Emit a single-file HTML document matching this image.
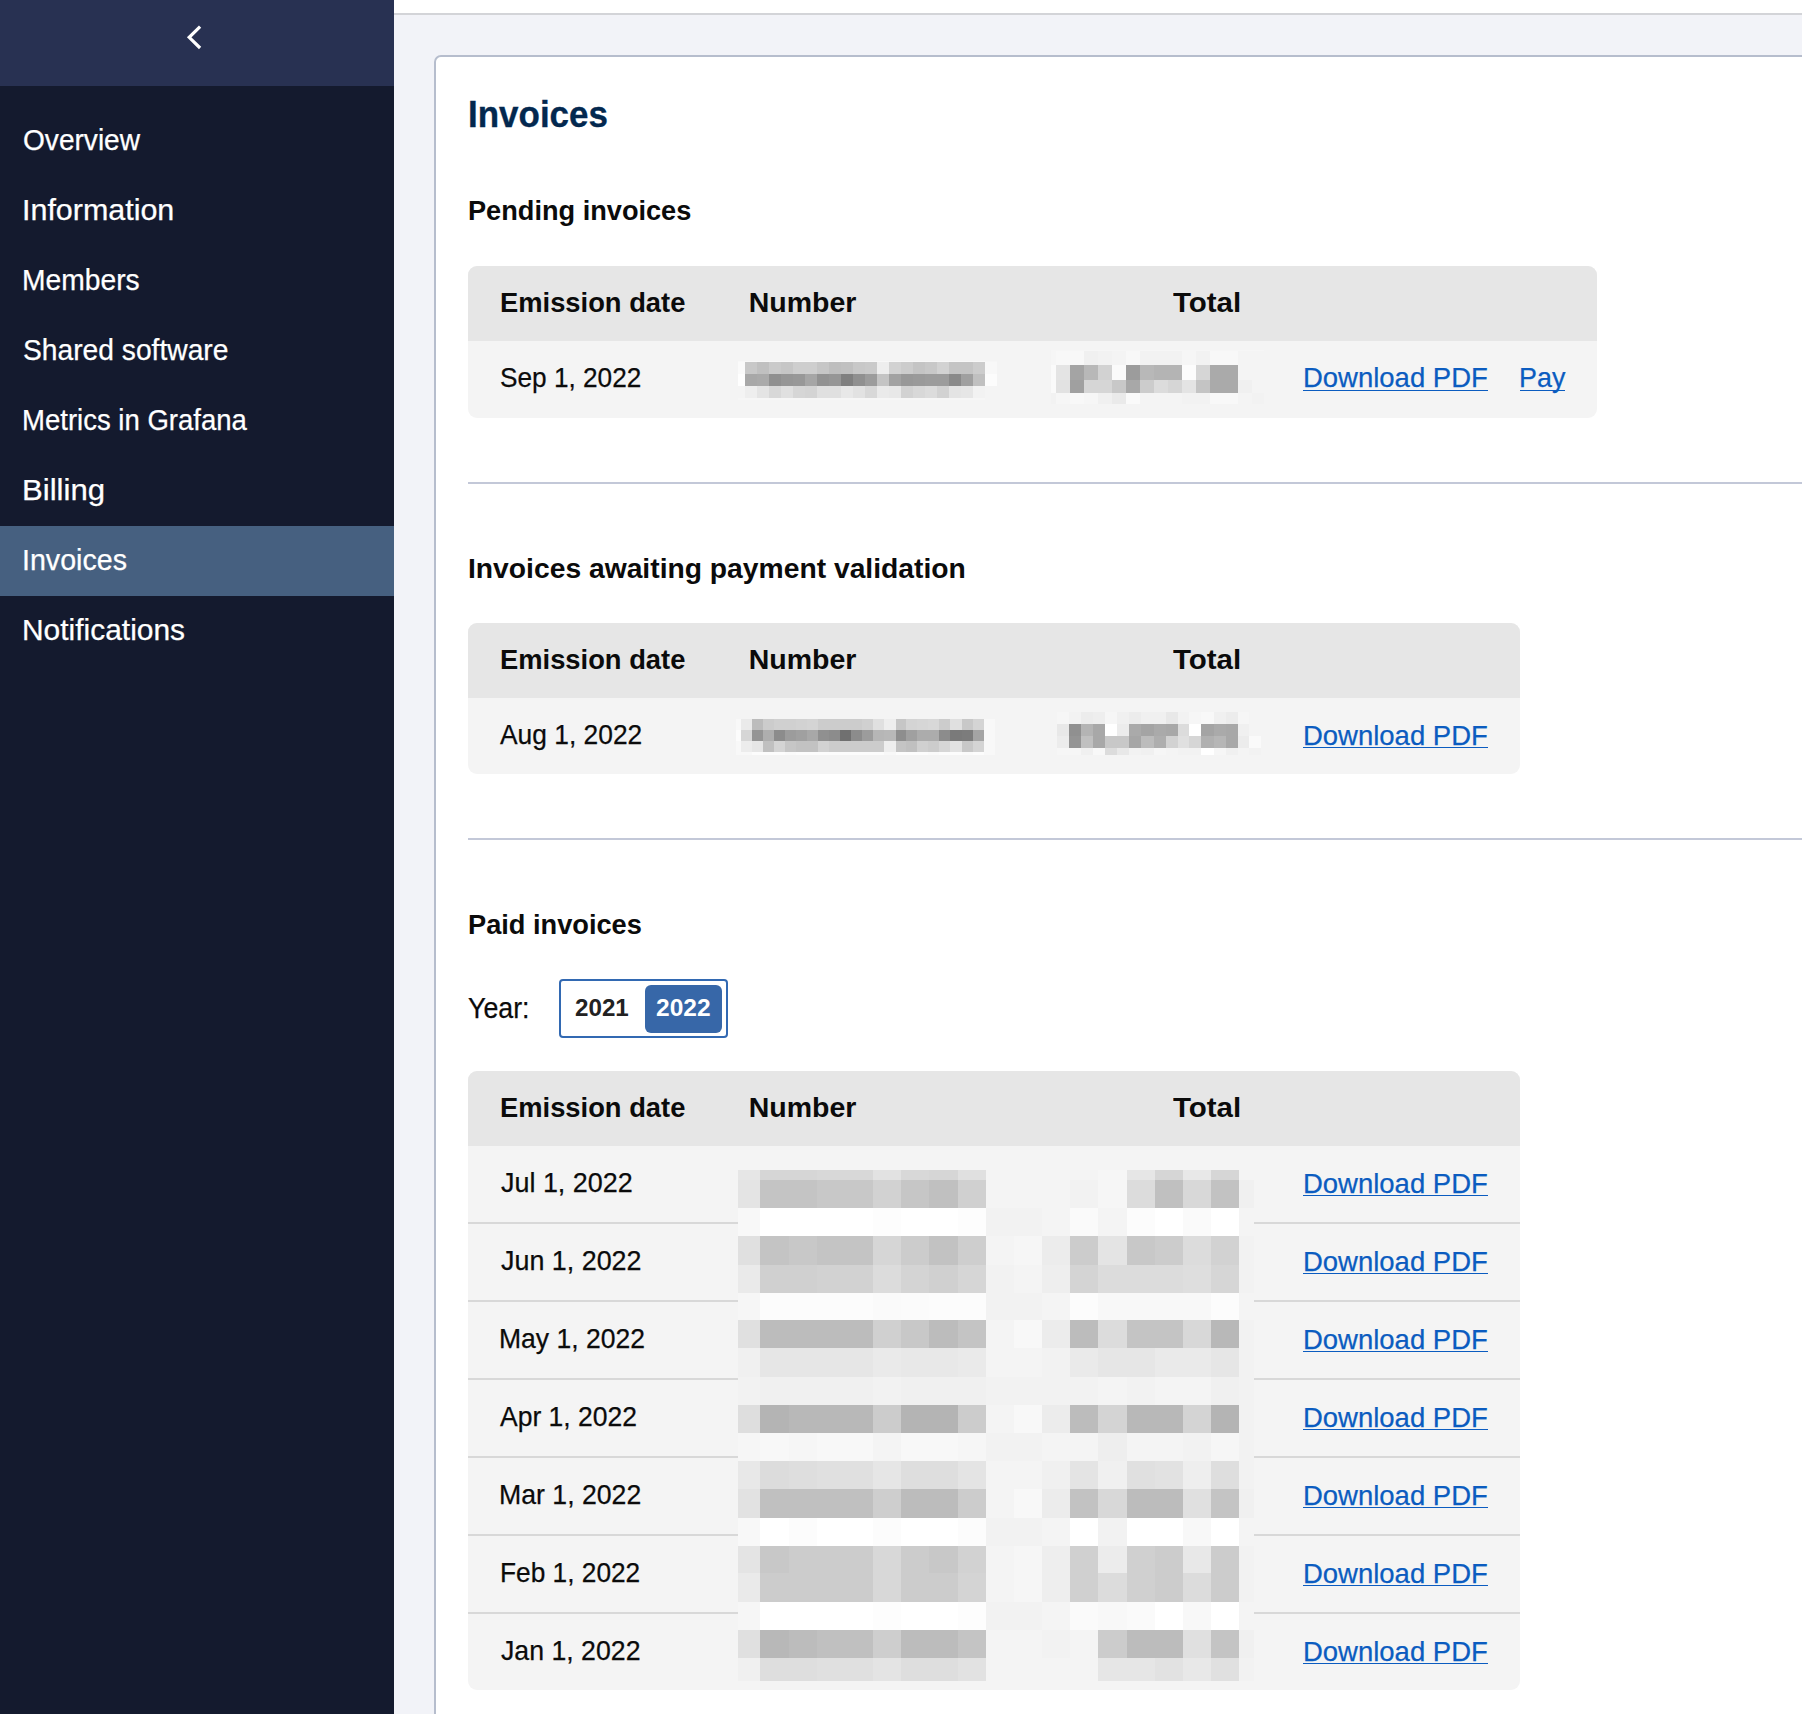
<!DOCTYPE html>
<html><head><meta charset="utf-8"><style>
html,body{margin:0;padding:0;}
body{width:1802px;height:1714px;overflow:hidden;position:relative;background:#f2f3f8;font-family:"Liberation Sans", sans-serif;}
.t{position:absolute;white-space:nowrap;line-height:1;transform-origin:0 0;}
.ul{position:absolute;height:1.3px;background:#0b5cc0;}
.rg{-webkit-text-stroke:0.25px currentColor;}
.tt{-webkit-text-stroke:0.35px currentColor;}
#side{position:absolute;left:0;top:0;width:394px;height:1714px;background:#141a2e;}
#sidehd{position:absolute;left:0;top:0;width:394px;height:86px;background:#283152;}
#active{position:absolute;left:0;top:526px;width:394px;height:70px;background:#466080;}
#topbar{position:absolute;left:394px;top:0;width:1408px;height:13px;background:#fff;border-bottom:2px solid #d3d4d8;}
#card{position:absolute;left:434px;top:55px;width:1500px;height:1800px;background:#fff;border:2px solid #b6bdcd;border-radius:7px;}
.tbl{position:absolute;left:468px;border-radius:9px;overflow:hidden;background:#f4f4f4;}
.th{position:absolute;left:0;top:0;right:0;background:#e6e6e6;}
.sep{position:absolute;left:468px;width:1334px;height:1.6px;background:#c3c8d8;}
.rb{position:absolute;left:468px;width:1052px;height:1.6px;background:#d8d8d8;}
.pix{position:absolute;left:0;top:0;}
#tog{position:absolute;left:559.4px;top:979.3px;width:164.2px;height:55.1px;border:2px solid #3269b2;border-radius:4px;background:#fff;}
#togon{position:absolute;left:645px;top:985px;width:77px;height:48px;background:#3767a8;border-radius:6px;}
</style></head><body>
<div id="topbar"></div>
<div id="side"><div id="sidehd"></div><div id="active"></div>
<svg style="position:absolute;left:0;top:0" width="394" height="86"><path d="M200.1 26.6 L189.2 37.3 L200.1 48" fill="none" stroke="#fff" stroke-width="3.2" stroke-linecap="butt" stroke-linejoin="miter"/></svg>
</div>
<div id="card"></div>
<div class="tbl" style="top:265.8px;width:1129px;height:152.1px"><div class="th" style="height:75.1px"></div></div>
<div class="sep" style="top:482px"></div>
<div class="tbl" style="top:623.1px;width:1052px;height:150.7px"><div class="th" style="height:74.9px"></div></div>
<div class="sep" style="top:838px"></div>
<div id="tog"></div><div id="togon"></div>
<div class="tbl" style="top:1070.8px;width:1052px;height:618.9px"><div class="th" style="height:75.1px"></div></div>
<div class="rb" style="top:1222.1px"></div><div class="rb" style="top:1300.1px"></div><div class="rb" style="top:1378.1px"></div><div class="rb" style="top:1456.1px"></div><div class="rb" style="top:1534.1px"></div><div class="rb" style="top:1612.1px"></div>
<svg class="pix" width="1802" height="1714" viewBox="0 0 1802 1714" shape-rendering="crispEdges"><rect x="738.0" y="360.5" width="7.0" height="1.5" fill="#f8f8f8"/><rect x="745.0" y="360.5" width="12.0" height="1.5" fill="#f8f8f8"/><rect x="757.0" y="360.5" width="12.0" height="1.5" fill="#f8f8f8"/><rect x="769.0" y="360.5" width="12.0" height="1.5" fill="#f8f8f8"/><rect x="781.0" y="360.5" width="12.0" height="1.5" fill="#f8f8f8"/><rect x="793.0" y="360.5" width="12.0" height="1.5" fill="#f8f8f8"/><rect x="805.0" y="360.5" width="12.0" height="1.5" fill="#f8f8f8"/><rect x="817.0" y="360.5" width="12.0" height="1.5" fill="#f8f8f8"/><rect x="829.0" y="360.5" width="12.0" height="1.5" fill="#f8f8f8"/><rect x="841.0" y="360.5" width="12.0" height="1.5" fill="#f8f8f8"/><rect x="853.0" y="360.5" width="12.0" height="1.5" fill="#f8f8f8"/><rect x="865.0" y="360.5" width="12.0" height="1.5" fill="#f8f8f8"/><rect x="877.0" y="360.5" width="12.0" height="1.5" fill="#f8f8f8"/><rect x="889.0" y="360.5" width="12.0" height="1.5" fill="#f8f8f8"/><rect x="901.0" y="360.5" width="12.0" height="1.5" fill="#f8f8f8"/><rect x="913.0" y="360.5" width="12.0" height="1.5" fill="#f8f8f8"/><rect x="925.0" y="360.5" width="12.0" height="1.5" fill="#f8f8f8"/><rect x="937.0" y="360.5" width="12.0" height="1.5" fill="#f8f8f8"/><rect x="949.0" y="360.5" width="12.0" height="1.5" fill="#f8f8f8"/><rect x="961.0" y="360.5" width="12.0" height="1.5" fill="#f8f8f8"/><rect x="973.0" y="360.5" width="12.0" height="1.5" fill="#f8f8f8"/><rect x="985.0" y="360.5" width="12.0" height="1.5" fill="#f6f6f6"/><rect x="738.0" y="362.0" width="7.0" height="12.0" fill="#fafafa"/><rect x="745.0" y="362.0" width="12.0" height="12.0" fill="#c8c8c8"/><rect x="757.0" y="362.0" width="12.0" height="12.0" fill="#c0c0c0"/><rect x="769.0" y="362.0" width="12.0" height="12.0" fill="#cacaca"/><rect x="781.0" y="362.0" width="12.0" height="12.0" fill="#c6c6c6"/><rect x="793.0" y="362.0" width="12.0" height="12.0" fill="#cecece"/><rect x="805.0" y="362.0" width="12.0" height="12.0" fill="#cecece"/><rect x="817.0" y="362.0" width="12.0" height="12.0" fill="#c6c6c6"/><rect x="829.0" y="362.0" width="12.0" height="12.0" fill="#bebebe"/><rect x="841.0" y="362.0" width="12.0" height="12.0" fill="#c0c0c0"/><rect x="853.0" y="362.0" width="12.0" height="12.0" fill="#c8c8c8"/><rect x="865.0" y="362.0" width="12.0" height="12.0" fill="#cacaca"/><rect x="877.0" y="362.0" width="12.0" height="12.0" fill="#eeeeee"/><rect x="889.0" y="362.0" width="12.0" height="12.0" fill="#d2d2d2"/><rect x="901.0" y="362.0" width="12.0" height="12.0" fill="#cccccc"/><rect x="913.0" y="362.0" width="12.0" height="12.0" fill="#c4c4c4"/><rect x="925.0" y="362.0" width="12.0" height="12.0" fill="#c8c8c8"/><rect x="937.0" y="362.0" width="12.0" height="12.0" fill="#d2d2d2"/><rect x="949.0" y="362.0" width="12.0" height="12.0" fill="#c4c4c4"/><rect x="961.0" y="362.0" width="12.0" height="12.0" fill="#c4c4c4"/><rect x="973.0" y="362.0" width="12.0" height="12.0" fill="#cccccc"/><rect x="985.0" y="362.0" width="12.0" height="12.0" fill="#f8f8f8"/><rect x="738.0" y="374.0" width="7.0" height="12.0" fill="#fefefe"/><rect x="745.0" y="374.0" width="12.0" height="12.0" fill="#a8a8a8"/><rect x="757.0" y="374.0" width="12.0" height="12.0" fill="#aaaaaa"/><rect x="769.0" y="374.0" width="12.0" height="12.0" fill="#909090"/><rect x="781.0" y="374.0" width="12.0" height="12.0" fill="#969696"/><rect x="793.0" y="374.0" width="12.0" height="12.0" fill="#989898"/><rect x="805.0" y="374.0" width="12.0" height="12.0" fill="#a6a6a6"/><rect x="817.0" y="374.0" width="12.0" height="12.0" fill="#929292"/><rect x="829.0" y="374.0" width="12.0" height="12.0" fill="#969696"/><rect x="841.0" y="374.0" width="12.0" height="12.0" fill="#808080"/><rect x="853.0" y="374.0" width="12.0" height="12.0" fill="#909090"/><rect x="865.0" y="374.0" width="12.0" height="12.0" fill="#9c9c9c"/><rect x="877.0" y="374.0" width="12.0" height="12.0" fill="#c4c4c4"/><rect x="889.0" y="374.0" width="12.0" height="12.0" fill="#a2a2a2"/><rect x="901.0" y="374.0" width="12.0" height="12.0" fill="#989898"/><rect x="913.0" y="374.0" width="12.0" height="12.0" fill="#9a9a9a"/><rect x="925.0" y="374.0" width="12.0" height="12.0" fill="#9c9c9c"/><rect x="937.0" y="374.0" width="12.0" height="12.0" fill="#9c9c9c"/><rect x="949.0" y="374.0" width="12.0" height="12.0" fill="#8a8a8a"/><rect x="961.0" y="374.0" width="12.0" height="12.0" fill="#a0a0a0"/><rect x="973.0" y="374.0" width="12.0" height="12.0" fill="#c0c0c0"/><rect x="985.0" y="374.0" width="12.0" height="12.0" fill="#fcfcfc"/><rect x="738.0" y="386.0" width="7.0" height="12.0" fill="#f4f4f4"/><rect x="745.0" y="386.0" width="12.0" height="12.0" fill="#eeeeee"/><rect x="757.0" y="386.0" width="12.0" height="12.0" fill="#e4e4e4"/><rect x="769.0" y="386.0" width="12.0" height="12.0" fill="#d8d8d8"/><rect x="781.0" y="386.0" width="12.0" height="12.0" fill="#e0e0e0"/><rect x="793.0" y="386.0" width="12.0" height="12.0" fill="#d6d6d6"/><rect x="805.0" y="386.0" width="12.0" height="12.0" fill="#d4d4d4"/><rect x="817.0" y="386.0" width="12.0" height="12.0" fill="#e0e0e0"/><rect x="829.0" y="386.0" width="12.0" height="12.0" fill="#e0e0e0"/><rect x="841.0" y="386.0" width="12.0" height="12.0" fill="#e8e8e8"/><rect x="853.0" y="386.0" width="12.0" height="12.0" fill="#e2e2e2"/><rect x="865.0" y="386.0" width="12.0" height="12.0" fill="#d8d8d8"/><rect x="877.0" y="386.0" width="12.0" height="12.0" fill="#eaeaea"/><rect x="889.0" y="386.0" width="12.0" height="12.0" fill="#e8e8e8"/><rect x="901.0" y="386.0" width="12.0" height="12.0" fill="#d2d2d2"/><rect x="913.0" y="386.0" width="12.0" height="12.0" fill="#d8d8d8"/><rect x="925.0" y="386.0" width="12.0" height="12.0" fill="#dcdcdc"/><rect x="937.0" y="386.0" width="12.0" height="12.0" fill="#d2d2d2"/><rect x="949.0" y="386.0" width="12.0" height="12.0" fill="#e4e4e4"/><rect x="961.0" y="386.0" width="12.0" height="12.0" fill="#e6e6e6"/><rect x="973.0" y="386.0" width="12.0" height="12.0" fill="#f2f2f2"/><rect x="985.0" y="386.0" width="12.0" height="12.0" fill="#f4f4f4"/><rect x="738.0" y="398.0" width="7.0" height="1.5" fill="#f6f6f6"/><rect x="745.0" y="398.0" width="12.0" height="1.5" fill="#f6f6f6"/><rect x="757.0" y="398.0" width="12.0" height="1.5" fill="#f6f6f6"/><rect x="769.0" y="398.0" width="12.0" height="1.5" fill="#f6f6f6"/><rect x="781.0" y="398.0" width="12.0" height="1.5" fill="#f6f6f6"/><rect x="793.0" y="398.0" width="12.0" height="1.5" fill="#f6f6f6"/><rect x="805.0" y="398.0" width="12.0" height="1.5" fill="#f6f6f6"/><rect x="817.0" y="398.0" width="12.0" height="1.5" fill="#f6f6f6"/><rect x="829.0" y="398.0" width="12.0" height="1.5" fill="#f6f6f6"/><rect x="841.0" y="398.0" width="12.0" height="1.5" fill="#f6f6f6"/><rect x="853.0" y="398.0" width="12.0" height="1.5" fill="#f6f6f6"/><rect x="865.0" y="398.0" width="12.0" height="1.5" fill="#f6f6f6"/><rect x="877.0" y="398.0" width="12.0" height="1.5" fill="#f6f6f6"/><rect x="889.0" y="398.0" width="12.0" height="1.5" fill="#f6f6f6"/><rect x="901.0" y="398.0" width="12.0" height="1.5" fill="#f6f6f6"/><rect x="913.0" y="398.0" width="12.0" height="1.5" fill="#f6f6f6"/><rect x="925.0" y="398.0" width="12.0" height="1.5" fill="#f6f6f6"/><rect x="937.0" y="398.0" width="12.0" height="1.5" fill="#f6f6f6"/><rect x="949.0" y="398.0" width="12.0" height="1.5" fill="#f6f6f6"/><rect x="961.0" y="398.0" width="12.0" height="1.5" fill="#f6f6f6"/><rect x="973.0" y="398.0" width="12.0" height="1.5" fill="#f6f6f6"/><rect x="985.0" y="398.0" width="12.0" height="1.5" fill="#f4f4f4"/><rect x="1051.0" y="349.6" width="5.0" height="1.6" fill="#f6f6f6"/><rect x="1056.0" y="349.6" width="14.0" height="1.6" fill="#f6f6f6"/><rect x="1070.0" y="349.6" width="14.0" height="1.6" fill="#f6f6f6"/><rect x="1084.0" y="349.6" width="14.0" height="1.6" fill="#f6f6f6"/><rect x="1098.0" y="349.6" width="14.0" height="1.6" fill="#f6f6f6"/><rect x="1112.0" y="349.6" width="14.0" height="1.6" fill="#f6f6f6"/><rect x="1126.0" y="349.6" width="14.0" height="1.6" fill="#f6f6f6"/><rect x="1140.0" y="349.6" width="14.0" height="1.6" fill="#f6f6f6"/><rect x="1154.0" y="349.6" width="14.0" height="1.6" fill="#f6f6f6"/><rect x="1168.0" y="349.6" width="14.0" height="1.6" fill="#f6f6f6"/><rect x="1182.0" y="349.6" width="14.0" height="1.6" fill="#f6f6f6"/><rect x="1196.0" y="349.6" width="14.0" height="1.6" fill="#f6f6f6"/><rect x="1210.0" y="349.6" width="14.0" height="1.6" fill="#f6f6f6"/><rect x="1224.0" y="349.6" width="14.0" height="1.6" fill="#f6f6f6"/><rect x="1238.0" y="349.6" width="14.0" height="1.6" fill="#f6f6f6"/><rect x="1252.0" y="349.6" width="12.0" height="1.6" fill="#f6f6f6"/><rect x="1051.0" y="351.2" width="5.0" height="14.1" fill="#f6f6f6"/><rect x="1056.0" y="351.2" width="14.0" height="14.1" fill="#f8f8f8"/><rect x="1070.0" y="351.2" width="14.0" height="14.1" fill="#f8f8f8"/><rect x="1084.0" y="351.2" width="14.0" height="14.1" fill="#f0f0f0"/><rect x="1098.0" y="351.2" width="14.0" height="14.1" fill="#f2f2f2"/><rect x="1112.0" y="351.2" width="14.0" height="14.1" fill="#f4f4f4"/><rect x="1126.0" y="351.2" width="14.0" height="14.1" fill="#f8f8f8"/><rect x="1140.0" y="351.2" width="14.0" height="14.1" fill="#f2f2f2"/><rect x="1154.0" y="351.2" width="14.0" height="14.1" fill="#f2f2f2"/><rect x="1168.0" y="351.2" width="14.0" height="14.1" fill="#f2f2f2"/><rect x="1182.0" y="351.2" width="14.0" height="14.1" fill="#f6f6f6"/><rect x="1196.0" y="351.2" width="14.0" height="14.1" fill="#f2f2f2"/><rect x="1210.0" y="351.2" width="14.0" height="14.1" fill="#f8f8f8"/><rect x="1224.0" y="351.2" width="14.0" height="14.1" fill="#f8f8f8"/><rect x="1238.0" y="351.2" width="14.0" height="14.1" fill="#f4f4f4"/><rect x="1252.0" y="351.2" width="12.0" height="14.1" fill="#f4f4f4"/><rect x="1051.0" y="365.3" width="5.0" height="14.3" fill="#fafafa"/><rect x="1056.0" y="365.3" width="14.0" height="14.3" fill="#e4e4e4"/><rect x="1070.0" y="365.3" width="14.0" height="14.3" fill="#a4a4a4"/><rect x="1084.0" y="365.3" width="14.0" height="14.3" fill="#b8b8b8"/><rect x="1098.0" y="365.3" width="14.0" height="14.3" fill="#d2d2d2"/><rect x="1112.0" y="365.3" width="14.0" height="14.3" fill="#fafafa"/><rect x="1126.0" y="365.3" width="14.0" height="14.3" fill="#9c9c9c"/><rect x="1140.0" y="365.3" width="14.0" height="14.3" fill="#b8b8b8"/><rect x="1154.0" y="365.3" width="14.0" height="14.3" fill="#b4b4b4"/><rect x="1168.0" y="365.3" width="14.0" height="14.3" fill="#b4b4b4"/><rect x="1182.0" y="365.3" width="14.0" height="14.3" fill="#fcfcfc"/><rect x="1196.0" y="365.3" width="14.0" height="14.3" fill="#d6d6d6"/><rect x="1210.0" y="365.3" width="14.0" height="14.3" fill="#aaaaaa"/><rect x="1224.0" y="365.3" width="14.0" height="14.3" fill="#aaaaaa"/><rect x="1238.0" y="365.3" width="14.0" height="14.3" fill="#f4f4f4"/><rect x="1252.0" y="365.3" width="12.0" height="14.3" fill="#f4f4f4"/><rect x="1051.0" y="379.6" width="5.0" height="13.8" fill="#fafafa"/><rect x="1056.0" y="379.6" width="14.0" height="13.8" fill="#e2e2e2"/><rect x="1070.0" y="379.6" width="14.0" height="13.8" fill="#a0a0a0"/><rect x="1084.0" y="379.6" width="14.0" height="13.8" fill="#d6d6d6"/><rect x="1098.0" y="379.6" width="14.0" height="13.8" fill="#d6d6d6"/><rect x="1112.0" y="379.6" width="14.0" height="13.8" fill="#c8c8c8"/><rect x="1126.0" y="379.6" width="14.0" height="13.8" fill="#a8a8a8"/><rect x="1140.0" y="379.6" width="14.0" height="13.8" fill="#cccccc"/><rect x="1154.0" y="379.6" width="14.0" height="13.8" fill="#dcdcdc"/><rect x="1168.0" y="379.6" width="14.0" height="13.8" fill="#d6d6d6"/><rect x="1182.0" y="379.6" width="14.0" height="13.8" fill="#e4e4e4"/><rect x="1196.0" y="379.6" width="14.0" height="13.8" fill="#c4c4c4"/><rect x="1210.0" y="379.6" width="14.0" height="13.8" fill="#aaaaaa"/><rect x="1224.0" y="379.6" width="14.0" height="13.8" fill="#aaaaaa"/><rect x="1238.0" y="379.6" width="14.0" height="13.8" fill="#f0f0f0"/><rect x="1252.0" y="379.6" width="12.0" height="13.8" fill="#f4f4f4"/><rect x="1051.0" y="393.4" width="5.0" height="10.4" fill="#f2f2f2"/><rect x="1056.0" y="393.4" width="14.0" height="10.4" fill="#f6f6f6"/><rect x="1070.0" y="393.4" width="14.0" height="10.4" fill="#f8f8f8"/><rect x="1084.0" y="393.4" width="14.0" height="10.4" fill="#f6f6f6"/><rect x="1098.0" y="393.4" width="14.0" height="10.4" fill="#f0f0f0"/><rect x="1112.0" y="393.4" width="14.0" height="10.4" fill="#eaeaea"/><rect x="1126.0" y="393.4" width="14.0" height="10.4" fill="#fafafa"/><rect x="1140.0" y="393.4" width="14.0" height="10.4" fill="#f4f4f4"/><rect x="1154.0" y="393.4" width="14.0" height="10.4" fill="#f4f4f4"/><rect x="1168.0" y="393.4" width="14.0" height="10.4" fill="#f4f4f4"/><rect x="1182.0" y="393.4" width="14.0" height="10.4" fill="#f2f2f2"/><rect x="1196.0" y="393.4" width="14.0" height="10.4" fill="#f2f2f2"/><rect x="1210.0" y="393.4" width="14.0" height="10.4" fill="#f8f8f8"/><rect x="1224.0" y="393.4" width="14.0" height="10.4" fill="#f8f8f8"/><rect x="1238.0" y="393.4" width="14.0" height="10.4" fill="#f4f4f4"/><rect x="1252.0" y="393.4" width="12.0" height="10.4" fill="#f2f2f2"/><rect x="736.0" y="719.2" width="5.0" height="10.8" fill="#f8f8f8"/><rect x="741.0" y="719.2" width="11.0" height="10.8" fill="#eaeaea"/><rect x="752.0" y="719.2" width="11.0" height="10.8" fill="#bcbcbc"/><rect x="763.0" y="719.2" width="11.0" height="10.8" fill="#cccccc"/><rect x="774.0" y="719.2" width="11.0" height="10.8" fill="#d0d0d0"/><rect x="785.0" y="719.2" width="11.0" height="10.8" fill="#d0d0d0"/><rect x="796.0" y="719.2" width="11.0" height="10.8" fill="#d2d2d2"/><rect x="807.0" y="719.2" width="11.0" height="10.8" fill="#d4d4d4"/><rect x="818.0" y="719.2" width="11.0" height="10.8" fill="#cccccc"/><rect x="829.0" y="719.2" width="11.0" height="10.8" fill="#cccccc"/><rect x="840.0" y="719.2" width="11.0" height="10.8" fill="#cccccc"/><rect x="851.0" y="719.2" width="11.0" height="10.8" fill="#cccccc"/><rect x="862.0" y="719.2" width="11.0" height="10.8" fill="#d0d0d0"/><rect x="873.0" y="719.2" width="11.0" height="10.8" fill="#e0e0e0"/><rect x="884.0" y="719.2" width="12.0" height="10.8" fill="#eeeeee"/><rect x="896.0" y="719.2" width="10.0" height="10.8" fill="#c6c6c6"/><rect x="906.0" y="719.2" width="11.0" height="10.8" fill="#d4d4d4"/><rect x="917.0" y="719.2" width="11.0" height="10.8" fill="#d6d6d6"/><rect x="928.0" y="719.2" width="11.0" height="10.8" fill="#d8d8d8"/><rect x="939.0" y="719.2" width="11.0" height="10.8" fill="#cccccc"/><rect x="950.0" y="719.2" width="12.0" height="10.8" fill="#e0e0e0"/><rect x="962.0" y="719.2" width="11.0" height="10.8" fill="#c8c8c8"/><rect x="973.0" y="719.2" width="11.0" height="10.8" fill="#d4d4d4"/><rect x="984.0" y="719.2" width="11.0" height="10.8" fill="#f8f8f8"/><rect x="736.0" y="730.0" width="5.0" height="11.0" fill="#fcfcfc"/><rect x="741.0" y="730.0" width="11.0" height="11.0" fill="#d6d6d6"/><rect x="752.0" y="730.0" width="11.0" height="11.0" fill="#949494"/><rect x="763.0" y="730.0" width="11.0" height="11.0" fill="#aeaeae"/><rect x="774.0" y="730.0" width="11.0" height="11.0" fill="#8c8c8c"/><rect x="785.0" y="730.0" width="11.0" height="11.0" fill="#9c9c9c"/><rect x="796.0" y="730.0" width="11.0" height="11.0" fill="#a0a0a0"/><rect x="807.0" y="730.0" width="11.0" height="11.0" fill="#a8a8a8"/><rect x="818.0" y="730.0" width="11.0" height="11.0" fill="#909090"/><rect x="829.0" y="730.0" width="11.0" height="11.0" fill="#8c8c8c"/><rect x="840.0" y="730.0" width="11.0" height="11.0" fill="#707070"/><rect x="851.0" y="730.0" width="11.0" height="11.0" fill="#8c8c8c"/><rect x="862.0" y="730.0" width="11.0" height="11.0" fill="#9c9c9c"/><rect x="873.0" y="730.0" width="11.0" height="11.0" fill="#b6b6b6"/><rect x="884.0" y="730.0" width="12.0" height="11.0" fill="#b8b8b8"/><rect x="896.0" y="730.0" width="10.0" height="11.0" fill="#8e8e8e"/><rect x="906.0" y="730.0" width="11.0" height="11.0" fill="#a0a0a0"/><rect x="917.0" y="730.0" width="11.0" height="11.0" fill="#acacac"/><rect x="928.0" y="730.0" width="11.0" height="11.0" fill="#acacac"/><rect x="939.0" y="730.0" width="11.0" height="11.0" fill="#8c8c8c"/><rect x="950.0" y="730.0" width="12.0" height="11.0" fill="#7a7a7a"/><rect x="962.0" y="730.0" width="11.0" height="11.0" fill="#7c7c7c"/><rect x="973.0" y="730.0" width="11.0" height="11.0" fill="#a4a4a4"/><rect x="984.0" y="730.0" width="11.0" height="11.0" fill="#f8f8f8"/><rect x="736.0" y="741.0" width="5.0" height="11.0" fill="#f8f8f8"/><rect x="741.0" y="741.0" width="11.0" height="11.0" fill="#ececec"/><rect x="752.0" y="741.0" width="11.0" height="11.0" fill="#e6e6e6"/><rect x="763.0" y="741.0" width="11.0" height="11.0" fill="#c0c0c0"/><rect x="774.0" y="741.0" width="11.0" height="11.0" fill="#d4d4d4"/><rect x="785.0" y="741.0" width="11.0" height="11.0" fill="#c6c6c6"/><rect x="796.0" y="741.0" width="11.0" height="11.0" fill="#c2c2c2"/><rect x="807.0" y="741.0" width="11.0" height="11.0" fill="#c2c2c2"/><rect x="818.0" y="741.0" width="11.0" height="11.0" fill="#d2d2d2"/><rect x="829.0" y="741.0" width="11.0" height="11.0" fill="#cccccc"/><rect x="840.0" y="741.0" width="11.0" height="11.0" fill="#cccccc"/><rect x="851.0" y="741.0" width="11.0" height="11.0" fill="#cccccc"/><rect x="862.0" y="741.0" width="11.0" height="11.0" fill="#cccccc"/><rect x="873.0" y="741.0" width="11.0" height="11.0" fill="#cccccc"/><rect x="884.0" y="741.0" width="12.0" height="11.0" fill="#eeeeee"/><rect x="896.0" y="741.0" width="10.0" height="11.0" fill="#c4c4c4"/><rect x="906.0" y="741.0" width="11.0" height="11.0" fill="#c0c0c0"/><rect x="917.0" y="741.0" width="11.0" height="11.0" fill="#d0d0d0"/><rect x="928.0" y="741.0" width="11.0" height="11.0" fill="#cccccc"/><rect x="939.0" y="741.0" width="11.0" height="11.0" fill="#d6d6d6"/><rect x="950.0" y="741.0" width="12.0" height="11.0" fill="#e2e2e2"/><rect x="962.0" y="741.0" width="11.0" height="11.0" fill="#c8c8c8"/><rect x="973.0" y="741.0" width="11.0" height="11.0" fill="#d4d4d4"/><rect x="984.0" y="741.0" width="11.0" height="11.0" fill="#f8f8f8"/><rect x="736.0" y="752.0" width="5.0" height="2.5" fill="#f8f8f8"/><rect x="741.0" y="752.0" width="11.0" height="2.5" fill="#f8f8f8"/><rect x="752.0" y="752.0" width="11.0" height="2.5" fill="#fcfcfc"/><rect x="763.0" y="752.0" width="11.0" height="2.5" fill="#fcfcfc"/><rect x="774.0" y="752.0" width="11.0" height="2.5" fill="#fcfcfc"/><rect x="785.0" y="752.0" width="11.0" height="2.5" fill="#fafafa"/><rect x="796.0" y="752.0" width="11.0" height="2.5" fill="#fcfcfc"/><rect x="807.0" y="752.0" width="11.0" height="2.5" fill="#fcfcfc"/><rect x="818.0" y="752.0" width="11.0" height="2.5" fill="#fcfcfc"/><rect x="829.0" y="752.0" width="11.0" height="2.5" fill="#fcfcfc"/><rect x="840.0" y="752.0" width="11.0" height="2.5" fill="#fcfcfc"/><rect x="851.0" y="752.0" width="11.0" height="2.5" fill="#fcfcfc"/><rect x="862.0" y="752.0" width="11.0" height="2.5" fill="#fcfcfc"/><rect x="873.0" y="752.0" width="11.0" height="2.5" fill="#fcfcfc"/><rect x="884.0" y="752.0" width="12.0" height="2.5" fill="#f8f8f8"/><rect x="896.0" y="752.0" width="10.0" height="2.5" fill="#fcfcfc"/><rect x="906.0" y="752.0" width="11.0" height="2.5" fill="#fcfcfc"/><rect x="917.0" y="752.0" width="11.0" height="2.5" fill="#fcfcfc"/><rect x="928.0" y="752.0" width="11.0" height="2.5" fill="#fafafa"/><rect x="939.0" y="752.0" width="11.0" height="2.5" fill="#fcfcfc"/><rect x="950.0" y="752.0" width="12.0" height="2.5" fill="#fcfcfc"/><rect x="962.0" y="752.0" width="11.0" height="2.5" fill="#fafafa"/><rect x="973.0" y="752.0" width="11.0" height="2.5" fill="#fcfcfc"/><rect x="984.0" y="752.0" width="11.0" height="2.5" fill="#f8f8f8"/><rect x="1057.0" y="712.0" width="12.0" height="12.0" fill="#f6f6f6"/><rect x="1069.0" y="712.0" width="12.0" height="12.0" fill="#f2f2f2"/><rect x="1081.0" y="712.0" width="12.0" height="12.0" fill="#ececec"/><rect x="1093.0" y="712.0" width="12.0" height="12.0" fill="#eeeeee"/><rect x="1105.0" y="712.0" width="12.0" height="12.0" fill="#f6f6f6"/><rect x="1117.0" y="712.0" width="12.0" height="12.0" fill="#f0f0f0"/><rect x="1129.0" y="712.0" width="12.0" height="12.0" fill="#ececec"/><rect x="1141.0" y="712.0" width="13.0" height="12.0" fill="#f0f0f0"/><rect x="1154.0" y="712.0" width="12.0" height="12.0" fill="#f0f0f0"/><rect x="1166.0" y="712.0" width="12.0" height="12.0" fill="#e8e8e8"/><rect x="1178.0" y="712.0" width="11.0" height="12.0" fill="#f2f2f2"/><rect x="1189.0" y="712.0" width="12.0" height="12.0" fill="#f6f6f6"/><rect x="1201.0" y="712.0" width="13.0" height="12.0" fill="#f8f8f8"/><rect x="1214.0" y="712.0" width="12.0" height="12.0" fill="#f0f0f0"/><rect x="1226.0" y="712.0" width="12.0" height="12.0" fill="#ececec"/><rect x="1238.0" y="712.0" width="11.0" height="12.0" fill="#f6f6f6"/><rect x="1249.0" y="712.0" width="12.0" height="12.0" fill="#f4f4f4"/><rect x="1057.0" y="724.0" width="12.0" height="12.0" fill="#e8e8e8"/><rect x="1069.0" y="724.0" width="12.0" height="12.0" fill="#909090"/><rect x="1081.0" y="724.0" width="12.0" height="12.0" fill="#b4b4b4"/><rect x="1093.0" y="724.0" width="12.0" height="12.0" fill="#a8a8a8"/><rect x="1105.0" y="724.0" width="12.0" height="12.0" fill="#ffffff"/><rect x="1117.0" y="724.0" width="12.0" height="12.0" fill="#ececec"/><rect x="1129.0" y="724.0" width="12.0" height="12.0" fill="#aaaaaa"/><rect x="1141.0" y="724.0" width="13.0" height="12.0" fill="#a4a4a4"/><rect x="1154.0" y="724.0" width="12.0" height="12.0" fill="#aaaaaa"/><rect x="1166.0" y="724.0" width="12.0" height="12.0" fill="#a8a8a8"/><rect x="1178.0" y="724.0" width="11.0" height="12.0" fill="#dcdcdc"/><rect x="1189.0" y="724.0" width="12.0" height="12.0" fill="#ffffff"/><rect x="1201.0" y="724.0" width="13.0" height="12.0" fill="#a4a4a4"/><rect x="1214.0" y="724.0" width="12.0" height="12.0" fill="#aaaaaa"/><rect x="1226.0" y="724.0" width="12.0" height="12.0" fill="#a8a8a8"/><rect x="1238.0" y="724.0" width="11.0" height="12.0" fill="#f0f0f0"/><rect x="1249.0" y="724.0" width="12.0" height="12.0" fill="#f4f4f4"/><rect x="1057.0" y="736.0" width="12.0" height="12.0" fill="#ececec"/><rect x="1069.0" y="736.0" width="12.0" height="12.0" fill="#949494"/><rect x="1081.0" y="736.0" width="12.0" height="12.0" fill="#c0c0c0"/><rect x="1093.0" y="736.0" width="12.0" height="12.0" fill="#a8a8a8"/><rect x="1105.0" y="736.0" width="12.0" height="12.0" fill="#c8c8c8"/><rect x="1117.0" y="736.0" width="12.0" height="12.0" fill="#c8c8c8"/><rect x="1129.0" y="736.0" width="12.0" height="12.0" fill="#a6a6a6"/><rect x="1141.0" y="736.0" width="13.0" height="12.0" fill="#bcbcbc"/><rect x="1154.0" y="736.0" width="12.0" height="12.0" fill="#aeaeae"/><rect x="1166.0" y="736.0" width="12.0" height="12.0" fill="#d2d2d2"/><rect x="1178.0" y="736.0" width="11.0" height="12.0" fill="#e0e0e0"/><rect x="1189.0" y="736.0" width="12.0" height="12.0" fill="#d6d6d6"/><rect x="1201.0" y="736.0" width="13.0" height="12.0" fill="#b0b0b0"/><rect x="1214.0" y="736.0" width="12.0" height="12.0" fill="#b6b6b6"/><rect x="1226.0" y="736.0" width="12.0" height="12.0" fill="#a8a8a8"/><rect x="1238.0" y="736.0" width="11.0" height="12.0" fill="#ececec"/><rect x="1249.0" y="736.0" width="12.0" height="12.0" fill="#fafafa"/><rect x="1057.0" y="748.0" width="12.0" height="7.0" fill="#f6f6f6"/><rect x="1069.0" y="748.0" width="12.0" height="7.0" fill="#f6f6f6"/><rect x="1081.0" y="748.0" width="12.0" height="7.0" fill="#f0f0f0"/><rect x="1093.0" y="748.0" width="12.0" height="7.0" fill="#f8f8f8"/><rect x="1105.0" y="748.0" width="12.0" height="7.0" fill="#dcdcdc"/><rect x="1117.0" y="748.0" width="12.0" height="7.0" fill="#e8e8e8"/><rect x="1129.0" y="748.0" width="12.0" height="7.0" fill="#f2f2f2"/><rect x="1141.0" y="748.0" width="13.0" height="7.0" fill="#f0f0f0"/><rect x="1154.0" y="748.0" width="12.0" height="7.0" fill="#f6f6f6"/><rect x="1166.0" y="748.0" width="12.0" height="7.0" fill="#f4f4f4"/><rect x="1178.0" y="748.0" width="11.0" height="7.0" fill="#f2f2f2"/><rect x="1189.0" y="748.0" width="12.0" height="7.0" fill="#f2f2f2"/><rect x="1201.0" y="748.0" width="13.0" height="7.0" fill="#ffffff"/><rect x="1214.0" y="748.0" width="12.0" height="7.0" fill="#f6f6f6"/><rect x="1226.0" y="748.0" width="12.0" height="7.0" fill="#f0f0f0"/><rect x="1238.0" y="748.0" width="11.0" height="7.0" fill="#f4f4f4"/><rect x="1249.0" y="748.0" width="12.0" height="7.0" fill="#f2f2f2"/><rect x="738.3" y="1169.8" width="21.4" height="10.1" fill="#e6e6e6"/><rect x="759.7" y="1169.8" width="29.0" height="10.1" fill="#d6d6d6"/><rect x="788.7" y="1169.8" width="28.1" height="10.1" fill="#d6d6d6"/><rect x="816.8" y="1169.8" width="28.4" height="10.1" fill="#d8d8d8"/><rect x="845.2" y="1169.8" width="28.0" height="10.1" fill="#d8d8d8"/><rect x="873.2" y="1169.8" width="27.8" height="10.1" fill="#e2e2e2"/><rect x="901.0" y="1169.8" width="28.4" height="10.1" fill="#d8d8d8"/><rect x="929.4" y="1169.8" width="28.1" height="10.1" fill="#d6d6d6"/><rect x="957.5" y="1169.8" width="28.1" height="10.1" fill="#e0e0e0"/><rect x="985.6" y="1169.8" width="28.4" height="10.1" fill="#f4f4f4"/><rect x="1014.0" y="1169.8" width="28.0" height="10.1" fill="#f4f4f4"/><rect x="1042.0" y="1169.8" width="28.1" height="10.1" fill="#f4f4f4"/><rect x="1070.1" y="1169.8" width="28.1" height="10.1" fill="#f4f4f4"/><rect x="1098.2" y="1169.8" width="28.4" height="10.1" fill="#f6f6f6"/><rect x="1126.6" y="1169.8" width="28.1" height="10.1" fill="#e6e6e6"/><rect x="1154.7" y="1169.8" width="28.1" height="10.1" fill="#d6d6d6"/><rect x="1182.8" y="1169.8" width="28.0" height="10.1" fill="#e8e8e8"/><rect x="1210.8" y="1169.8" width="28.1" height="10.1" fill="#d6d6d6"/><rect x="1238.9" y="1169.8" width="15.3" height="10.1" fill="#f4f4f4"/><rect x="738.3" y="1179.9" width="21.4" height="28.1" fill="#e4e4e4"/><rect x="759.7" y="1179.9" width="29.0" height="28.1" fill="#c4c4c4"/><rect x="788.7" y="1179.9" width="28.1" height="28.1" fill="#c4c4c4"/><rect x="816.8" y="1179.9" width="28.4" height="28.1" fill="#c8c8c8"/><rect x="845.2" y="1179.9" width="28.0" height="28.1" fill="#c8c8c8"/><rect x="873.2" y="1179.9" width="27.8" height="28.1" fill="#d2d2d2"/><rect x="901.0" y="1179.9" width="28.4" height="28.1" fill="#c6c6c6"/><rect x="929.4" y="1179.9" width="28.1" height="28.1" fill="#c0c0c0"/><rect x="957.5" y="1179.9" width="28.1" height="28.1" fill="#d0d0d0"/><rect x="985.6" y="1179.9" width="28.4" height="28.1" fill="#f4f4f4"/><rect x="1014.0" y="1179.9" width="28.0" height="28.1" fill="#f4f4f4"/><rect x="1042.0" y="1179.9" width="28.1" height="28.1" fill="#f4f4f4"/><rect x="1070.1" y="1179.9" width="28.1" height="28.1" fill="#f2f2f2"/><rect x="1098.2" y="1179.9" width="28.4" height="28.1" fill="#f6f6f6"/><rect x="1126.6" y="1179.9" width="28.1" height="28.1" fill="#dcdcdc"/><rect x="1154.7" y="1179.9" width="28.1" height="28.1" fill="#c0c0c0"/><rect x="1182.8" y="1179.9" width="28.0" height="28.1" fill="#d8d8d8"/><rect x="1210.8" y="1179.9" width="28.1" height="28.1" fill="#c2c2c2"/><rect x="1238.9" y="1179.9" width="15.3" height="28.1" fill="#f0f0f0"/><rect x="738.3" y="1208.0" width="21.4" height="28.4" fill="#f8f8f8"/><rect x="759.7" y="1208.0" width="29.0" height="28.4" fill="#ffffff"/><rect x="788.7" y="1208.0" width="28.1" height="28.4" fill="#ffffff"/><rect x="816.8" y="1208.0" width="28.4" height="28.4" fill="#ffffff"/><rect x="845.2" y="1208.0" width="28.0" height="28.4" fill="#ffffff"/><rect x="873.2" y="1208.0" width="27.8" height="28.4" fill="#fdfdfd"/><rect x="901.0" y="1208.0" width="28.4" height="28.4" fill="#ffffff"/><rect x="929.4" y="1208.0" width="28.1" height="28.4" fill="#ffffff"/><rect x="957.5" y="1208.0" width="28.1" height="28.4" fill="#fdfdfd"/><rect x="985.6" y="1208.0" width="28.4" height="28.4" fill="#f2f2f2"/><rect x="1014.0" y="1208.0" width="28.0" height="28.4" fill="#f2f2f2"/><rect x="1042.0" y="1208.0" width="28.1" height="28.4" fill="#f4f4f4"/><rect x="1070.1" y="1208.0" width="28.1" height="28.4" fill="#fafafa"/><rect x="1098.2" y="1208.0" width="28.4" height="28.4" fill="#f4f4f4"/><rect x="1126.6" y="1208.0" width="28.1" height="28.4" fill="#fcfcfc"/><rect x="1154.7" y="1208.0" width="28.1" height="28.4" fill="#ffffff"/><rect x="1182.8" y="1208.0" width="28.0" height="28.4" fill="#fafafa"/><rect x="1210.8" y="1208.0" width="28.1" height="28.4" fill="#ffffff"/><rect x="1238.9" y="1208.0" width="15.3" height="28.4" fill="#f4f4f4"/><rect x="738.3" y="1236.4" width="21.4" height="28.1" fill="#e0e0e0"/><rect x="759.7" y="1236.4" width="29.0" height="28.1" fill="#c4c4c4"/><rect x="788.7" y="1236.4" width="28.1" height="28.1" fill="#c8c8c8"/><rect x="816.8" y="1236.4" width="28.4" height="28.1" fill="#c4c4c4"/><rect x="845.2" y="1236.4" width="28.0" height="28.1" fill="#c4c4c4"/><rect x="873.2" y="1236.4" width="27.8" height="28.1" fill="#d6d6d6"/><rect x="901.0" y="1236.4" width="28.4" height="28.1" fill="#cccccc"/><rect x="929.4" y="1236.4" width="28.1" height="28.1" fill="#c2c2c2"/><rect x="957.5" y="1236.4" width="28.1" height="28.1" fill="#cecece"/><rect x="985.6" y="1236.4" width="28.4" height="28.1" fill="#f4f4f4"/><rect x="1014.0" y="1236.4" width="28.0" height="28.1" fill="#f6f6f6"/><rect x="1042.0" y="1236.4" width="28.1" height="28.1" fill="#ececec"/><rect x="1070.1" y="1236.4" width="28.1" height="28.1" fill="#cccccc"/><rect x="1098.2" y="1236.4" width="28.4" height="28.1" fill="#e4e4e4"/><rect x="1126.6" y="1236.4" width="28.1" height="28.1" fill="#c8c8c8"/><rect x="1154.7" y="1236.4" width="28.1" height="28.1" fill="#cccccc"/><rect x="1182.8" y="1236.4" width="28.0" height="28.1" fill="#dcdcdc"/><rect x="1210.8" y="1236.4" width="28.1" height="28.1" fill="#d2d2d2"/><rect x="1238.9" y="1236.4" width="15.3" height="28.1" fill="#f2f2f2"/><rect x="738.3" y="1264.5" width="21.4" height="28.1" fill="#eaeaea"/><rect x="759.7" y="1264.5" width="29.0" height="28.1" fill="#d0d0d0"/><rect x="788.7" y="1264.5" width="28.1" height="28.1" fill="#d0d0d0"/><rect x="816.8" y="1264.5" width="28.4" height="28.1" fill="#d2d2d2"/><rect x="845.2" y="1264.5" width="28.0" height="28.1" fill="#d2d2d2"/><rect x="873.2" y="1264.5" width="27.8" height="28.1" fill="#dcdcdc"/><rect x="901.0" y="1264.5" width="28.4" height="28.1" fill="#d4d4d4"/><rect x="929.4" y="1264.5" width="28.1" height="28.1" fill="#d0d0d0"/><rect x="957.5" y="1264.5" width="28.1" height="28.1" fill="#d6d6d6"/><rect x="985.6" y="1264.5" width="28.4" height="28.1" fill="#f2f2f2"/><rect x="1014.0" y="1264.5" width="28.0" height="28.1" fill="#f4f4f4"/><rect x="1042.0" y="1264.5" width="28.1" height="28.1" fill="#eeeeee"/><rect x="1070.1" y="1264.5" width="28.1" height="28.1" fill="#d4d4d4"/><rect x="1098.2" y="1264.5" width="28.4" height="28.1" fill="#dcdcdc"/><rect x="1126.6" y="1264.5" width="28.1" height="28.1" fill="#dcdcdc"/><rect x="1154.7" y="1264.5" width="28.1" height="28.1" fill="#dcdcdc"/><rect x="1182.8" y="1264.5" width="28.0" height="28.1" fill="#dedede"/><rect x="1210.8" y="1264.5" width="28.1" height="28.1" fill="#d6d6d6"/><rect x="1238.9" y="1264.5" width="15.3" height="28.1" fill="#f2f2f2"/><rect x="738.3" y="1292.6" width="21.4" height="27.7" fill="#f6f6f6"/><rect x="759.7" y="1292.6" width="29.0" height="27.7" fill="#fcfcfc"/><rect x="788.7" y="1292.6" width="28.1" height="27.7" fill="#fcfcfc"/><rect x="816.8" y="1292.6" width="28.4" height="27.7" fill="#fcfcfc"/><rect x="845.2" y="1292.6" width="28.0" height="27.7" fill="#fcfcfc"/><rect x="873.2" y="1292.6" width="27.8" height="27.7" fill="#fafafa"/><rect x="901.0" y="1292.6" width="28.4" height="27.7" fill="#fbfbfb"/><rect x="929.4" y="1292.6" width="28.1" height="27.7" fill="#fcfcfc"/><rect x="957.5" y="1292.6" width="28.1" height="27.7" fill="#fcfcfc"/><rect x="985.6" y="1292.6" width="28.4" height="27.7" fill="#f2f2f2"/><rect x="1014.0" y="1292.6" width="28.0" height="27.7" fill="#f2f2f2"/><rect x="1042.0" y="1292.6" width="28.1" height="27.7" fill="#f4f4f4"/><rect x="1070.1" y="1292.6" width="28.1" height="27.7" fill="#fcfcfc"/><rect x="1098.2" y="1292.6" width="28.4" height="27.7" fill="#f8f8f8"/><rect x="1126.6" y="1292.6" width="28.1" height="27.7" fill="#f8f8f8"/><rect x="1154.7" y="1292.6" width="28.1" height="27.7" fill="#f8f8f8"/><rect x="1182.8" y="1292.6" width="28.0" height="27.7" fill="#f8f8f8"/><rect x="1210.8" y="1292.6" width="28.1" height="27.7" fill="#fcfcfc"/><rect x="1238.9" y="1292.6" width="15.3" height="27.7" fill="#f4f4f4"/><rect x="738.3" y="1320.3" width="21.4" height="28.1" fill="#e0e0e0"/><rect x="759.7" y="1320.3" width="29.0" height="28.1" fill="#bcbcbc"/><rect x="788.7" y="1320.3" width="28.1" height="28.1" fill="#bcbcbc"/><rect x="816.8" y="1320.3" width="28.4" height="28.1" fill="#bcbcbc"/><rect x="845.2" y="1320.3" width="28.0" height="28.1" fill="#bcbcbc"/><rect x="873.2" y="1320.3" width="27.8" height="28.1" fill="#d0d0d0"/><rect x="901.0" y="1320.3" width="28.4" height="28.1" fill="#c8c8c8"/><rect x="929.4" y="1320.3" width="28.1" height="28.1" fill="#bcbcbc"/><rect x="957.5" y="1320.3" width="28.1" height="28.1" fill="#c4c4c4"/><rect x="985.6" y="1320.3" width="28.4" height="28.1" fill="#f4f4f4"/><rect x="1014.0" y="1320.3" width="28.0" height="28.1" fill="#f8f8f8"/><rect x="1042.0" y="1320.3" width="28.1" height="28.1" fill="#ececec"/><rect x="1070.1" y="1320.3" width="28.1" height="28.1" fill="#bcbcbc"/><rect x="1098.2" y="1320.3" width="28.4" height="28.1" fill="#dcdcdc"/><rect x="1126.6" y="1320.3" width="28.1" height="28.1" fill="#c4c4c4"/><rect x="1154.7" y="1320.3" width="28.1" height="28.1" fill="#c4c4c4"/><rect x="1182.8" y="1320.3" width="28.0" height="28.1" fill="#d8d8d8"/><rect x="1210.8" y="1320.3" width="28.1" height="28.1" fill="#b8b8b8"/><rect x="1238.9" y="1320.3" width="15.3" height="28.1" fill="#f2f2f2"/><rect x="738.3" y="1348.4" width="21.4" height="28.1" fill="#f0f0f0"/><rect x="759.7" y="1348.4" width="29.0" height="28.1" fill="#e6e6e6"/><rect x="788.7" y="1348.4" width="28.1" height="28.1" fill="#e6e6e6"/><rect x="816.8" y="1348.4" width="28.4" height="28.1" fill="#e6e6e6"/><rect x="845.2" y="1348.4" width="28.0" height="28.1" fill="#e6e6e6"/><rect x="873.2" y="1348.4" width="27.8" height="28.1" fill="#eaeaea"/><rect x="901.0" y="1348.4" width="28.4" height="28.1" fill="#e8e8e8"/><rect x="929.4" y="1348.4" width="28.1" height="28.1" fill="#e8e8e8"/><rect x="957.5" y="1348.4" width="28.1" height="28.1" fill="#eaeaea"/><rect x="985.6" y="1348.4" width="28.4" height="28.1" fill="#f4f4f4"/><rect x="1014.0" y="1348.4" width="28.0" height="28.1" fill="#f4f4f4"/><rect x="1042.0" y="1348.4" width="28.1" height="28.1" fill="#f2f2f2"/><rect x="1070.1" y="1348.4" width="28.1" height="28.1" fill="#eaeaea"/><rect x="1098.2" y="1348.4" width="28.4" height="28.1" fill="#e6e6e6"/><rect x="1126.6" y="1348.4" width="28.1" height="28.1" fill="#e6e6e6"/><rect x="1154.7" y="1348.4" width="28.1" height="28.1" fill="#eaeaea"/><rect x="1182.8" y="1348.4" width="28.0" height="28.1" fill="#eaeaea"/><rect x="1210.8" y="1348.4" width="28.1" height="28.1" fill="#e6e6e6"/><rect x="1238.9" y="1348.4" width="15.3" height="28.1" fill="#f2f2f2"/><rect x="738.3" y="1376.5" width="21.4" height="28.2" fill="#f2f2f2"/><rect x="759.7" y="1376.5" width="29.0" height="28.2" fill="#f0f0f0"/><rect x="788.7" y="1376.5" width="28.1" height="28.2" fill="#f0f0f0"/><rect x="816.8" y="1376.5" width="28.4" height="28.2" fill="#f0f0f0"/><rect x="845.2" y="1376.5" width="28.0" height="28.2" fill="#f0f0f0"/><rect x="873.2" y="1376.5" width="27.8" height="28.2" fill="#f2f2f2"/><rect x="901.0" y="1376.5" width="28.4" height="28.2" fill="#f0f0f0"/><rect x="929.4" y="1376.5" width="28.1" height="28.2" fill="#f0f0f0"/><rect x="957.5" y="1376.5" width="28.1" height="28.2" fill="#f0f0f0"/><rect x="985.6" y="1376.5" width="28.4" height="28.2" fill="#f2f2f2"/><rect x="1014.0" y="1376.5" width="28.0" height="28.2" fill="#f2f2f2"/><rect x="1042.0" y="1376.5" width="28.1" height="28.2" fill="#f2f2f2"/><rect x="1070.1" y="1376.5" width="28.1" height="28.2" fill="#f2f2f2"/><rect x="1098.2" y="1376.5" width="28.4" height="28.2" fill="#f4f4f4"/><rect x="1126.6" y="1376.5" width="28.1" height="28.2" fill="#f2f2f2"/><rect x="1154.7" y="1376.5" width="28.1" height="28.2" fill="#f4f4f4"/><rect x="1182.8" y="1376.5" width="28.0" height="28.2" fill="#f4f4f4"/><rect x="1210.8" y="1376.5" width="28.1" height="28.2" fill="#f0f0f0"/><rect x="1238.9" y="1376.5" width="15.3" height="28.2" fill="#f2f2f2"/><rect x="738.3" y="1404.7" width="21.4" height="28.0" fill="#dedede"/><rect x="759.7" y="1404.7" width="29.0" height="28.0" fill="#b4b4b4"/><rect x="788.7" y="1404.7" width="28.1" height="28.0" fill="#b8b8b8"/><rect x="816.8" y="1404.7" width="28.4" height="28.0" fill="#b8b8b8"/><rect x="845.2" y="1404.7" width="28.0" height="28.0" fill="#b8b8b8"/><rect x="873.2" y="1404.7" width="27.8" height="28.0" fill="#cccccc"/><rect x="901.0" y="1404.7" width="28.4" height="28.0" fill="#b4b4b4"/><rect x="929.4" y="1404.7" width="28.1" height="28.0" fill="#b4b4b4"/><rect x="957.5" y="1404.7" width="28.1" height="28.0" fill="#cccccc"/><rect x="985.6" y="1404.7" width="28.4" height="28.0" fill="#f4f4f4"/><rect x="1014.0" y="1404.7" width="28.0" height="28.0" fill="#f8f8f8"/><rect x="1042.0" y="1404.7" width="28.1" height="28.0" fill="#ececec"/><rect x="1070.1" y="1404.7" width="28.1" height="28.0" fill="#bcbcbc"/><rect x="1098.2" y="1404.7" width="28.4" height="28.0" fill="#d4d4d4"/><rect x="1126.6" y="1404.7" width="28.1" height="28.0" fill="#b8b8b8"/><rect x="1154.7" y="1404.7" width="28.1" height="28.0" fill="#b8b8b8"/><rect x="1182.8" y="1404.7" width="28.0" height="28.0" fill="#d4d4d4"/><rect x="1210.8" y="1404.7" width="28.1" height="28.0" fill="#b4b4b4"/><rect x="1238.9" y="1404.7" width="15.3" height="28.0" fill="#f2f2f2"/><rect x="738.3" y="1432.7" width="21.4" height="28.3" fill="#f6f6f6"/><rect x="759.7" y="1432.7" width="29.0" height="28.3" fill="#f8f8f8"/><rect x="788.7" y="1432.7" width="28.1" height="28.3" fill="#f6f6f6"/><rect x="816.8" y="1432.7" width="28.4" height="28.3" fill="#f8f8f8"/><rect x="845.2" y="1432.7" width="28.0" height="28.3" fill="#f8f8f8"/><rect x="873.2" y="1432.7" width="27.8" height="28.3" fill="#f4f4f4"/><rect x="901.0" y="1432.7" width="28.4" height="28.3" fill="#f8f8f8"/><rect x="929.4" y="1432.7" width="28.1" height="28.3" fill="#f8f8f8"/><rect x="957.5" y="1432.7" width="28.1" height="28.3" fill="#f6f6f6"/><rect x="985.6" y="1432.7" width="28.4" height="28.3" fill="#f2f2f2"/><rect x="1014.0" y="1432.7" width="28.0" height="28.3" fill="#f2f2f2"/><rect x="1042.0" y="1432.7" width="28.1" height="28.3" fill="#f4f4f4"/><rect x="1070.1" y="1432.7" width="28.1" height="28.3" fill="#f4f4f4"/><rect x="1098.2" y="1432.7" width="28.4" height="28.3" fill="#eeeeee"/><rect x="1126.6" y="1432.7" width="28.1" height="28.3" fill="#f4f4f4"/><rect x="1154.7" y="1432.7" width="28.1" height="28.3" fill="#f4f4f4"/><rect x="1182.8" y="1432.7" width="28.0" height="28.3" fill="#f2f2f2"/><rect x="1210.8" y="1432.7" width="28.1" height="28.3" fill="#f6f6f6"/><rect x="1238.9" y="1432.7" width="15.3" height="28.3" fill="#f2f2f2"/><rect x="738.3" y="1461.0" width="21.4" height="28.0" fill="#e8e8e8"/><rect x="759.7" y="1461.0" width="29.0" height="28.0" fill="#dcdcdc"/><rect x="788.7" y="1461.0" width="28.1" height="28.0" fill="#dedede"/><rect x="816.8" y="1461.0" width="28.4" height="28.0" fill="#e0e0e0"/><rect x="845.2" y="1461.0" width="28.0" height="28.0" fill="#e0e0e0"/><rect x="873.2" y="1461.0" width="27.8" height="28.0" fill="#e6e6e6"/><rect x="901.0" y="1461.0" width="28.4" height="28.0" fill="#dedede"/><rect x="929.4" y="1461.0" width="28.1" height="28.0" fill="#dedede"/><rect x="957.5" y="1461.0" width="28.1" height="28.0" fill="#e4e4e4"/><rect x="985.6" y="1461.0" width="28.4" height="28.0" fill="#f4f4f4"/><rect x="1014.0" y="1461.0" width="28.0" height="28.0" fill="#f4f4f4"/><rect x="1042.0" y="1461.0" width="28.1" height="28.0" fill="#f0f0f0"/><rect x="1070.1" y="1461.0" width="28.1" height="28.0" fill="#e4e4e4"/><rect x="1098.2" y="1461.0" width="28.4" height="28.0" fill="#f0f0f0"/><rect x="1126.6" y="1461.0" width="28.1" height="28.0" fill="#e0e0e0"/><rect x="1154.7" y="1461.0" width="28.1" height="28.0" fill="#e2e2e2"/><rect x="1182.8" y="1461.0" width="28.0" height="28.0" fill="#eeeeee"/><rect x="1210.8" y="1461.0" width="28.1" height="28.0" fill="#dedede"/><rect x="1238.9" y="1461.0" width="15.3" height="28.0" fill="#f2f2f2"/><rect x="738.3" y="1489.0" width="21.4" height="28.5" fill="#e2e2e2"/><rect x="759.7" y="1489.0" width="29.0" height="28.5" fill="#c0c0c0"/><rect x="788.7" y="1489.0" width="28.1" height="28.5" fill="#c0c0c0"/><rect x="816.8" y="1489.0" width="28.4" height="28.5" fill="#c0c0c0"/><rect x="845.2" y="1489.0" width="28.0" height="28.5" fill="#c0c0c0"/><rect x="873.2" y="1489.0" width="27.8" height="28.5" fill="#cecece"/><rect x="901.0" y="1489.0" width="28.4" height="28.5" fill="#bcbcbc"/><rect x="929.4" y="1489.0" width="28.1" height="28.5" fill="#bcbcbc"/><rect x="957.5" y="1489.0" width="28.1" height="28.5" fill="#cccccc"/><rect x="985.6" y="1489.0" width="28.4" height="28.5" fill="#f4f4f4"/><rect x="1014.0" y="1489.0" width="28.0" height="28.5" fill="#f8f8f8"/><rect x="1042.0" y="1489.0" width="28.1" height="28.5" fill="#ececec"/><rect x="1070.1" y="1489.0" width="28.1" height="28.5" fill="#c2c2c2"/><rect x="1098.2" y="1489.0" width="28.4" height="28.5" fill="#d8d8d8"/><rect x="1126.6" y="1489.0" width="28.1" height="28.5" fill="#bcbcbc"/><rect x="1154.7" y="1489.0" width="28.1" height="28.5" fill="#bcbcbc"/><rect x="1182.8" y="1489.0" width="28.0" height="28.5" fill="#e0e0e0"/><rect x="1210.8" y="1489.0" width="28.1" height="28.5" fill="#c4c4c4"/><rect x="1238.9" y="1489.0" width="15.3" height="28.5" fill="#f0f0f0"/><rect x="738.3" y="1517.5" width="21.4" height="28.1" fill="#f8f8f8"/><rect x="759.7" y="1517.5" width="29.0" height="28.1" fill="#ffffff"/><rect x="788.7" y="1517.5" width="28.1" height="28.1" fill="#fcfcfc"/><rect x="816.8" y="1517.5" width="28.4" height="28.1" fill="#ffffff"/><rect x="845.2" y="1517.5" width="28.0" height="28.1" fill="#ffffff"/><rect x="873.2" y="1517.5" width="27.8" height="28.1" fill="#fcfcfc"/><rect x="901.0" y="1517.5" width="28.4" height="28.1" fill="#ffffff"/><rect x="929.4" y="1517.5" width="28.1" height="28.1" fill="#ffffff"/><rect x="957.5" y="1517.5" width="28.1" height="28.1" fill="#fcfcfc"/><rect x="985.6" y="1517.5" width="28.4" height="28.1" fill="#f2f2f2"/><rect x="1014.0" y="1517.5" width="28.0" height="28.1" fill="#f2f2f2"/><rect x="1042.0" y="1517.5" width="28.1" height="28.1" fill="#f4f4f4"/><rect x="1070.1" y="1517.5" width="28.1" height="28.1" fill="#ffffff"/><rect x="1098.2" y="1517.5" width="28.4" height="28.1" fill="#f2f2f2"/><rect x="1126.6" y="1517.5" width="28.1" height="28.1" fill="#ffffff"/><rect x="1154.7" y="1517.5" width="28.1" height="28.1" fill="#ffffff"/><rect x="1182.8" y="1517.5" width="28.0" height="28.1" fill="#f8f8f8"/><rect x="1210.8" y="1517.5" width="28.1" height="28.1" fill="#ffffff"/><rect x="1238.9" y="1517.5" width="15.3" height="28.1" fill="#f4f4f4"/><rect x="738.3" y="1545.6" width="21.4" height="27.8" fill="#e4e4e4"/><rect x="759.7" y="1545.6" width="29.0" height="27.8" fill="#c8c8c8"/><rect x="788.7" y="1545.6" width="28.1" height="27.8" fill="#cccccc"/><rect x="816.8" y="1545.6" width="28.4" height="27.8" fill="#cccccc"/><rect x="845.2" y="1545.6" width="28.0" height="27.8" fill="#cccccc"/><rect x="873.2" y="1545.6" width="27.8" height="27.8" fill="#d8d8d8"/><rect x="901.0" y="1545.6" width="28.4" height="27.8" fill="#cccccc"/><rect x="929.4" y="1545.6" width="28.1" height="27.8" fill="#c8c8c8"/><rect x="957.5" y="1545.6" width="28.1" height="27.8" fill="#d2d2d2"/><rect x="985.6" y="1545.6" width="28.4" height="27.8" fill="#f4f4f4"/><rect x="1014.0" y="1545.6" width="28.0" height="27.8" fill="#f6f6f6"/><rect x="1042.0" y="1545.6" width="28.1" height="27.8" fill="#eeeeee"/><rect x="1070.1" y="1545.6" width="28.1" height="27.8" fill="#d0d0d0"/><rect x="1098.2" y="1545.6" width="28.4" height="27.8" fill="#ececec"/><rect x="1126.6" y="1545.6" width="28.1" height="27.8" fill="#d0d0d0"/><rect x="1154.7" y="1545.6" width="28.1" height="27.8" fill="#cccccc"/><rect x="1182.8" y="1545.6" width="28.0" height="27.8" fill="#e8e8e8"/><rect x="1210.8" y="1545.6" width="28.1" height="27.8" fill="#cccccc"/><rect x="1238.9" y="1545.6" width="15.3" height="27.8" fill="#f2f2f2"/><rect x="738.3" y="1573.4" width="21.4" height="28.1" fill="#eaeaea"/><rect x="759.7" y="1573.4" width="29.0" height="28.1" fill="#cccccc"/><rect x="788.7" y="1573.4" width="28.1" height="28.1" fill="#cccccc"/><rect x="816.8" y="1573.4" width="28.4" height="28.1" fill="#cccccc"/><rect x="845.2" y="1573.4" width="28.0" height="28.1" fill="#cccccc"/><rect x="873.2" y="1573.4" width="27.8" height="28.1" fill="#d8d8d8"/><rect x="901.0" y="1573.4" width="28.4" height="28.1" fill="#cccccc"/><rect x="929.4" y="1573.4" width="28.1" height="28.1" fill="#cccccc"/><rect x="957.5" y="1573.4" width="28.1" height="28.1" fill="#d4d4d4"/><rect x="985.6" y="1573.4" width="28.4" height="28.1" fill="#f4f4f4"/><rect x="1014.0" y="1573.4" width="28.0" height="28.1" fill="#f6f6f6"/><rect x="1042.0" y="1573.4" width="28.1" height="28.1" fill="#eeeeee"/><rect x="1070.1" y="1573.4" width="28.1" height="28.1" fill="#d0d0d0"/><rect x="1098.2" y="1573.4" width="28.4" height="28.1" fill="#dcdcdc"/><rect x="1126.6" y="1573.4" width="28.1" height="28.1" fill="#d0d0d0"/><rect x="1154.7" y="1573.4" width="28.1" height="28.1" fill="#cccccc"/><rect x="1182.8" y="1573.4" width="28.0" height="28.1" fill="#dcdcdc"/><rect x="1210.8" y="1573.4" width="28.1" height="28.1" fill="#cccccc"/><rect x="1238.9" y="1573.4" width="15.3" height="28.1" fill="#f2f2f2"/><rect x="738.3" y="1601.5" width="21.4" height="28.0" fill="#f6f6f6"/><rect x="759.7" y="1601.5" width="29.0" height="28.0" fill="#ffffff"/><rect x="788.7" y="1601.5" width="28.1" height="28.0" fill="#ffffff"/><rect x="816.8" y="1601.5" width="28.4" height="28.0" fill="#ffffff"/><rect x="845.2" y="1601.5" width="28.0" height="28.0" fill="#ffffff"/><rect x="873.2" y="1601.5" width="27.8" height="28.0" fill="#fdfdfd"/><rect x="901.0" y="1601.5" width="28.4" height="28.0" fill="#ffffff"/><rect x="929.4" y="1601.5" width="28.1" height="28.0" fill="#ffffff"/><rect x="957.5" y="1601.5" width="28.1" height="28.0" fill="#fdfdfd"/><rect x="985.6" y="1601.5" width="28.4" height="28.0" fill="#f2f2f2"/><rect x="1014.0" y="1601.5" width="28.0" height="28.0" fill="#f2f2f2"/><rect x="1042.0" y="1601.5" width="28.1" height="28.0" fill="#f4f4f4"/><rect x="1070.1" y="1601.5" width="28.1" height="28.0" fill="#fafafa"/><rect x="1098.2" y="1601.5" width="28.4" height="28.0" fill="#f8f8f8"/><rect x="1126.6" y="1601.5" width="28.1" height="28.0" fill="#fafafa"/><rect x="1154.7" y="1601.5" width="28.1" height="28.0" fill="#ffffff"/><rect x="1182.8" y="1601.5" width="28.0" height="28.0" fill="#f8f8f8"/><rect x="1210.8" y="1601.5" width="28.1" height="28.0" fill="#ffffff"/><rect x="1238.9" y="1601.5" width="15.3" height="28.0" fill="#f4f4f4"/><rect x="738.3" y="1629.5" width="21.4" height="28.5" fill="#e0e0e0"/><rect x="759.7" y="1629.5" width="29.0" height="28.5" fill="#b8b8b8"/><rect x="788.7" y="1629.5" width="28.1" height="28.5" fill="#bcbcbc"/><rect x="816.8" y="1629.5" width="28.4" height="28.5" fill="#c0c0c0"/><rect x="845.2" y="1629.5" width="28.0" height="28.5" fill="#c0c0c0"/><rect x="873.2" y="1629.5" width="27.8" height="28.5" fill="#cecece"/><rect x="901.0" y="1629.5" width="28.4" height="28.5" fill="#bcbcbc"/><rect x="929.4" y="1629.5" width="28.1" height="28.5" fill="#bcbcbc"/><rect x="957.5" y="1629.5" width="28.1" height="28.5" fill="#c4c4c4"/><rect x="985.6" y="1629.5" width="28.4" height="28.5" fill="#f4f4f4"/><rect x="1014.0" y="1629.5" width="28.0" height="28.5" fill="#f4f4f4"/><rect x="1042.0" y="1629.5" width="28.1" height="28.5" fill="#f2f2f2"/><rect x="1070.1" y="1629.5" width="28.1" height="28.5" fill="#f4f4f4"/><rect x="1098.2" y="1629.5" width="28.4" height="28.5" fill="#cccccc"/><rect x="1126.6" y="1629.5" width="28.1" height="28.5" fill="#bcbcbc"/><rect x="1154.7" y="1629.5" width="28.1" height="28.5" fill="#bcbcbc"/><rect x="1182.8" y="1629.5" width="28.0" height="28.5" fill="#e0e0e0"/><rect x="1210.8" y="1629.5" width="28.1" height="28.5" fill="#c4c4c4"/><rect x="1238.9" y="1629.5" width="15.3" height="28.5" fill="#f0f0f0"/><rect x="738.3" y="1658.0" width="21.4" height="22.8" fill="#f0f0f0"/><rect x="759.7" y="1658.0" width="29.0" height="22.8" fill="#dedede"/><rect x="788.7" y="1658.0" width="28.1" height="22.8" fill="#dedede"/><rect x="816.8" y="1658.0" width="28.4" height="22.8" fill="#e0e0e0"/><rect x="845.2" y="1658.0" width="28.0" height="22.8" fill="#e0e0e0"/><rect x="873.2" y="1658.0" width="27.8" height="22.8" fill="#e4e4e4"/><rect x="901.0" y="1658.0" width="28.4" height="22.8" fill="#dedede"/><rect x="929.4" y="1658.0" width="28.1" height="22.8" fill="#dedede"/><rect x="957.5" y="1658.0" width="28.1" height="22.8" fill="#e2e2e2"/><rect x="985.6" y="1658.0" width="28.4" height="22.8" fill="#f4f4f4"/><rect x="1014.0" y="1658.0" width="28.0" height="22.8" fill="#f4f4f4"/><rect x="1042.0" y="1658.0" width="28.1" height="22.8" fill="#f4f4f4"/><rect x="1070.1" y="1658.0" width="28.1" height="22.8" fill="#f4f4f4"/><rect x="1098.2" y="1658.0" width="28.4" height="22.8" fill="#e6e6e6"/><rect x="1126.6" y="1658.0" width="28.1" height="22.8" fill="#e6e6e6"/><rect x="1154.7" y="1658.0" width="28.1" height="22.8" fill="#e2e2e2"/><rect x="1182.8" y="1658.0" width="28.0" height="22.8" fill="#e8e8e8"/><rect x="1210.8" y="1658.0" width="28.1" height="22.8" fill="#e0e0e0"/><rect x="1238.9" y="1658.0" width="15.3" height="22.8" fill="#f2f2f2"/></svg>
<div class="t rg" style="left:23.48px;top:125.75px;font-size:29.0px;font-weight:normal;color:#ffffff;transform:scaleX(0.9681);">Overview</div><div class="t rg" style="left:21.86px;top:195.75px;font-size:29.0px;font-weight:normal;color:#ffffff;transform:scaleX(1.0495);">Information</div><div class="t rg" style="left:22.34px;top:265.75px;font-size:29.0px;font-weight:normal;color:#ffffff;transform:scaleX(0.9739);">Members</div><div class="t rg" style="left:23.47px;top:335.75px;font-size:29.0px;font-weight:normal;color:#ffffff;transform:scaleX(0.9729);">Shared software</div><div class="t rg" style="left:22.40px;top:405.75px;font-size:29.0px;font-weight:normal;color:#ffffff;transform:scaleX(0.9493);">Metrics in Grafana</div><div class="t rg" style="left:22.11px;top:475.75px;font-size:29.0px;font-weight:normal;color:#ffffff;transform:scaleX(1.0732);">Billing</div><div class="t rg" style="left:22.03px;top:545.75px;font-size:29.0px;font-weight:normal;color:#ffffff;transform:scaleX(0.9863);">Invoices</div><div class="t rg" style="left:22.20px;top:615.75px;font-size:29.0px;font-weight:normal;color:#ffffff;transform:scaleX(1.0325);">Notifications</div><div class="t tt" style="left:467.70px;top:95.97px;font-size:37.25px;font-weight:bold;color:#03284f;transform:scaleX(0.9389);">Invoices</div><div class="t" style="left:467.77px;top:197.21px;font-size:27.75px;font-weight:bold;color:#0b0b0b;transform:scaleX(0.9785);">Pending invoices</div><div class="t" style="left:467.50px;top:554.51px;font-size:27.75px;font-weight:bold;color:#0b0b0b;transform:scaleX(1.0184);">Invoices awaiting payment validation</div><div class="t" style="left:467.57px;top:910.81px;font-size:27.75px;font-weight:bold;color:#0b0b0b;transform:scaleX(0.9800);">Paid invoices</div><div class="t" style="left:499.86px;top:288.07px;font-size:28.5px;font-weight:bold;color:#0b0b0b;transform:scaleX(0.9593);">Emission date</div><div class="t" style="left:748.69px;top:288.07px;font-size:28.5px;font-weight:bold;color:#0b0b0b;">Number</div><div class="t" style="left:1173.31px;top:288.07px;font-size:28.5px;font-weight:bold;color:#0b0b0b;transform:scaleX(1.0338);">Total</div><div class="t rg" style="left:499.95px;top:363.90px;font-size:28.0px;font-weight:normal;color:#0b0b0b;transform:scaleX(0.9354);">Sep 1, 2022</div><div class="t rg" style="left:1303.10px;top:363.47px;font-size:28.5px;font-weight:normal;color:#0b5cc0;transform:scaleX(0.9639);">Download PDF</div><div class="ul" style="left:1303px;width:185.0px;top:390px"></div><div class="t rg" style="left:1518.65px;top:363.47px;font-size:28.5px;font-weight:normal;color:#0b5cc0;transform:scaleX(0.9438);">Pay</div><div class="ul" style="left:1520.2px;width:45.1px;top:390px"></div><div class="t" style="left:499.86px;top:645.37px;font-size:28.5px;font-weight:bold;color:#0b0b0b;transform:scaleX(0.9593);">Emission date</div><div class="t" style="left:748.69px;top:645.37px;font-size:28.5px;font-weight:bold;color:#0b0b0b;">Number</div><div class="t" style="left:1173.31px;top:645.37px;font-size:28.5px;font-weight:bold;color:#0b0b0b;transform:scaleX(1.0338);">Total</div><div class="t rg" style="left:500.00px;top:721.40px;font-size:28.0px;font-weight:normal;color:#0b0b0b;transform:scaleX(0.9417);">Aug 1, 2022</div><div class="t rg" style="left:1303.10px;top:720.97px;font-size:28.5px;font-weight:normal;color:#0b5cc0;transform:scaleX(0.9639);">Download PDF</div><div class="ul" style="left:1303px;width:185.0px;top:747px"></div><div class="t rg" style="left:467.96px;top:993.56px;font-size:28.75px;font-weight:normal;color:#0b0b0b;transform:scaleX(0.9305);">Year:</div><div class="t" style="left:575.48px;top:995.70px;font-size:23.75px;font-weight:bold;color:#222222;transform:scaleX(1.0175);">2021</div><div class="t" style="left:655.76px;top:995.70px;font-size:23.75px;font-weight:bold;color:#ffffff;transform:scaleX(1.0319);">2022</div><div class="t" style="left:499.86px;top:1093.07px;font-size:28.5px;font-weight:bold;color:#0b0b0b;transform:scaleX(0.9593);">Emission date</div><div class="t" style="left:748.69px;top:1093.07px;font-size:28.5px;font-weight:bold;color:#0b0b0b;">Number</div><div class="t" style="left:1173.31px;top:1093.07px;font-size:28.5px;font-weight:bold;color:#0b0b0b;transform:scaleX(1.0338);">Total</div><div class="t rg" style="left:500.83px;top:1169.20px;font-size:28.0px;font-weight:normal;color:#0b0b0b;transform:scaleX(0.9615);">Jul 1, 2022</div><div class="t rg" style="left:1303.10px;top:1168.77px;font-size:28.5px;font-weight:normal;color:#0b5cc0;transform:scaleX(0.9639);">Download PDF</div><div class="ul" style="left:1303px;width:185.0px;top:1195px"></div><div class="t rg" style="left:500.83px;top:1247.20px;font-size:28.0px;font-weight:normal;color:#0b0b0b;transform:scaleX(0.9601);">Jun 1, 2022</div><div class="t rg" style="left:1303.10px;top:1246.77px;font-size:28.5px;font-weight:normal;color:#0b5cc0;transform:scaleX(0.9639);">Download PDF</div><div class="ul" style="left:1303px;width:185.0px;top:1273px"></div><div class="t rg" style="left:499.28px;top:1325.20px;font-size:28.0px;font-weight:normal;color:#0b0b0b;transform:scaleX(0.9471);">May 1, 2022</div><div class="t rg" style="left:1303.10px;top:1324.77px;font-size:28.5px;font-weight:normal;color:#0b5cc0;transform:scaleX(0.9639);">Download PDF</div><div class="ul" style="left:1303px;width:185.0px;top:1351px"></div><div class="t rg" style="left:500.10px;top:1403.20px;font-size:28.0px;font-weight:normal;color:#0b0b0b;transform:scaleX(0.9465);">Apr 1, 2022</div><div class="t rg" style="left:1303.10px;top:1402.77px;font-size:28.5px;font-weight:normal;color:#0b5cc0;transform:scaleX(0.9639);">Download PDF</div><div class="ul" style="left:1303px;width:185.0px;top:1429px"></div><div class="t rg" style="left:499.27px;top:1481.20px;font-size:28.0px;font-weight:normal;color:#0b0b0b;transform:scaleX(0.9521);">Mar 1, 2022</div><div class="t rg" style="left:1303.10px;top:1480.77px;font-size:28.5px;font-weight:normal;color:#0b5cc0;transform:scaleX(0.9639);">Download PDF</div><div class="ul" style="left:1303px;width:185.0px;top:1507px"></div><div class="t rg" style="left:499.70px;top:1559.20px;font-size:28.0px;font-weight:normal;color:#0b0b0b;transform:scaleX(0.9382);">Feb 1, 2022</div><div class="t rg" style="left:1303.10px;top:1558.77px;font-size:28.5px;font-weight:normal;color:#0b5cc0;transform:scaleX(0.9639);">Download PDF</div><div class="ul" style="left:1303px;width:185.0px;top:1585px"></div><div class="t rg" style="left:500.73px;top:1637.20px;font-size:28.0px;font-weight:normal;color:#0b0b0b;transform:scaleX(0.9532);">Jan 1, 2022</div><div class="t rg" style="left:1303.10px;top:1636.77px;font-size:28.5px;font-weight:normal;color:#0b5cc0;transform:scaleX(0.9639);">Download PDF</div><div class="ul" style="left:1303px;width:185.0px;top:1663px"></div>
</body></html>
